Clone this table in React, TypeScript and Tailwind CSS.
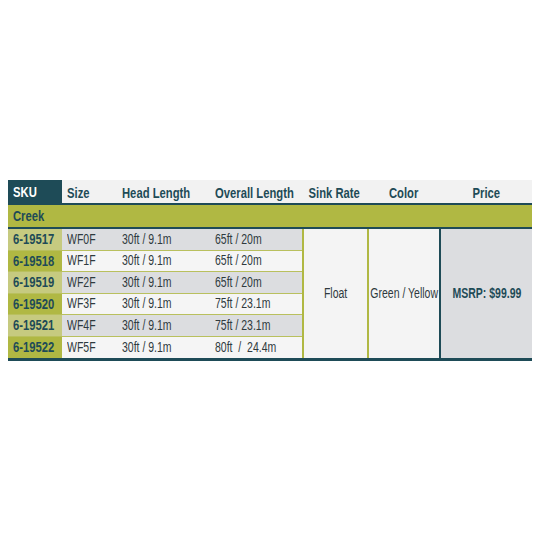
const rows = [
  { sku: "6-19517", size: "WF0F", head: "30ft / 9.1m", overall: "65ft / 20m" },
  { sku: "6-19518", size: "WF1F", head: "30ft / 9.1m", overall: "65ft / 20m" },
  { sku: "6-19519", size: "WF2F", head: "30ft / 9.1m", overall: "65ft / 20m" },
  { sku: "6-19520", size: "WF3F", head: "30ft / 9.1m", overall: "75ft / 23.1m" },
  { sku: "6-19521", size: "WF4F", head: "30ft / 9.1m", overall: "75ft / 23.1m" },
  { sku: "6-19522", size: "WF5F", head: "30ft / 9.1m", overall: "80ft  /  24.4m" },
];

// narrow face: Liberation Sans squeezed horizontally, like a condensed gothic
const N = ({ children, center }: { children: React.ReactNode; center?: boolean }) => (
  <span
    className={`inline-block whitespace-pre scale-x-[0.75] ${center ? "origin-center" : "origin-left"}`}
  >
    {children}
  </span>
);

export default function App() {
  return (
    <div className="w-[540px] h-[540px] bg-white pt-[180px] pl-[8px] font-['Liberation_Sans',Arial,sans-serif]">
      <div className="w-[524px] flex flex-col">
        {/* header */}
        <div className="grid grid-cols-[54px_53px_93px_94px_65px_74px_91px] h-[23px] bg-[#f2f2f2] text-[15px] font-bold text-[#1e4b57] pt-[2px]">
          <div className="bg-[#1e4b57] text-white flex items-center pl-[5px] -mt-[2px]"><N>SKU</N></div>
          <div className="flex items-center pl-[5px]"><N>Size</N></div>
          <div className="flex items-center pl-[7px]"><N>Head Length</N></div>
          <div className="flex items-center pl-[7px]"><N>Overall Length</N></div>
          <div className="flex items-center justify-center"><N center>Sink Rate</N></div>
          <div className="flex items-center justify-center"><N center>Color</N></div>
          <div className="flex items-center justify-center"><N center>Price</N></div>
        </div>

        {/* series band */}
        <div className="h-[26px] border-y-2 border-[#1e4b57] bg-[#b0b843] flex items-center pl-[5px] text-[15px] font-bold text-[#1e4b57]">
          <N>Creek</N>
        </div>

        {/* body */}
        <div className="flex border-b-[3px] border-[#1e4b57]">
          <div className="w-[294px] flex flex-col">
            {rows.map((r, i) => {
              const shaded = i % 2 === 0;
              return (
                <div
                  key={r.sku}
                  className={`flex h-[21.5px] text-[14px] text-[#2f3a3e] ${
                    i < rows.length - 1 ? "border-b border-[#b9c05e]" : ""
                  } ${shaded ? "bg-[#dcdde0]" : "bg-[#f5f5f5]"}`}
                >
                  <div
                    className={`w-[54px] flex items-center pl-[5px] text-[15px] font-bold text-[#1e4b57] ${
                      shaded ? "bg-[#c6ca80]" : "bg-[#b0b843]"
                    }`}
                  >
                    <N>{r.sku}</N>
                  </div>
                  <div className="w-[53px] flex items-center pl-[5px]"><N>{r.size}</N></div>
                  <div className="w-[93px] flex items-center pl-[7px]"><N>{r.head}</N></div>
                  <div className="w-[94px] flex items-center pl-[7px]"><N>{r.overall}</N></div>
                </div>
              );
            })}
          </div>
          <div className="w-[65px] bg-[#f4f4f4] border-l-2 border-[#b0b843] flex items-center justify-center text-[14px] text-[#2f3a3e]">
            <N center>Float</N>
          </div>
          <div className="w-[74px] bg-[#f4f4f4] border-l-2 border-r-2 border-[#b0b843] border-r-[#1e4b57] flex items-center justify-center text-[14px] text-[#2f3a3e]">
            <N center>Green / Yellow</N>
          </div>
          <div className="w-[91px] bg-[#dcdde0] flex items-center justify-center text-[14px] font-bold text-[#1e4b57]">
            <N center>MSRP: $99.99</N>
          </div>
        </div>
      </div>
    </div>
  );
}
